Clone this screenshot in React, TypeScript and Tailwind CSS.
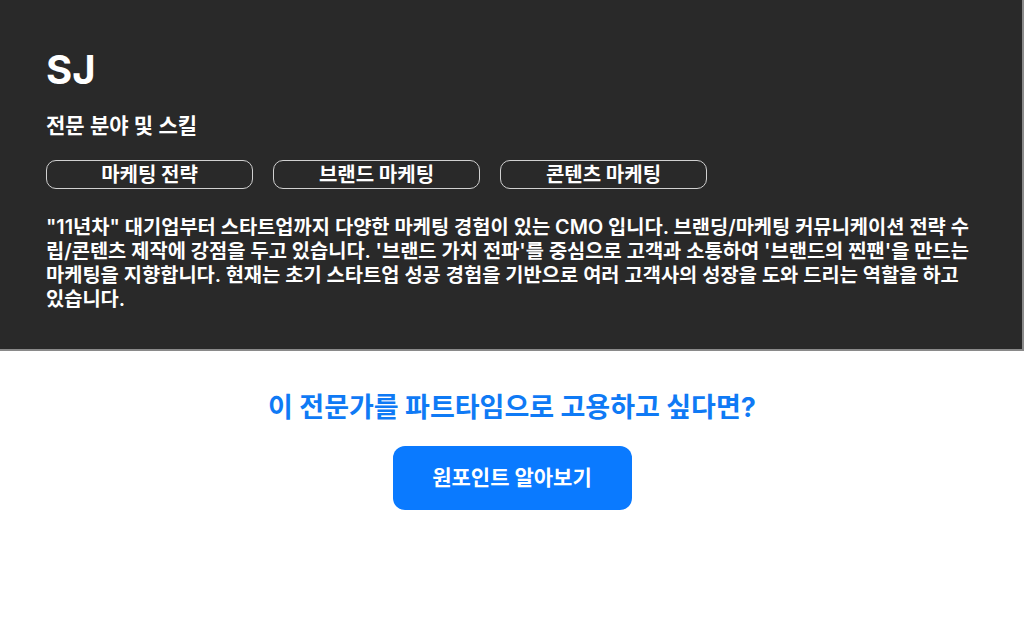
import React from "react";

const font = { fontFamily: '"Inter", "Noto Sans CJK KR", sans-serif' };

const skills = ["마케팅 전략", "브랜드 마케팅", "콘텐츠 마케팅"];

export default function App() {
  return (
    <div className="w-[1024px] h-[623px] bg-white" style={font}>
      <section className="w-[1024px] bg-[#292929] border-r-2 border-b-2 border-[#8a8a8a] px-[46px] pt-[44px] pb-[38px] text-white">
        <h1 className="text-[40px] leading-[52px] font-bold">SJ</h1>
        <h2 className="mt-[16px] text-[21px] leading-[28px] font-semibold">전문 분야 및 스킬</h2>
        <div className="mt-[20px] flex gap-[20px]">
          {skills.map((s) => (
            <div
              key={s}
              className="w-[207px] h-[29px] rounded-[10px] border border-[#d0d0d0] flex items-center justify-center text-[20px] font-bold"
            >
              {s}
            </div>
          ))}
        </div>
        <p className="mt-[26px] text-[19.8px] leading-[24px] font-semibold">
          "11년차" 대기업부터 스타트업까지 다양한 마케팅 경험이 있는 CMO 입니다. 브랜딩/마케팅 커뮤니케이션 전략 수립/콘텐츠 제작에 강점을 두고 있습니다. '브랜드 가치 전파'를 중심으로 고객과 소통하여 '브랜드의 찐팬'을 만드는 마케팅을 지향합니다. 현재는 초기 스타트업 성공 경험을 기반으로 여러 고객사의 성장을 도와 드리는 역할을 하고 있습니다.
        </p>
      </section>
      <div className="flex flex-col items-center pt-[39px]">
        <h3 className="text-[27px] leading-[36px] font-bold text-[#0f7af5]">이 전문가를 파트타임으로 고용하고 싶다면?</h3>
        <button className="mt-[20px] w-[239px] h-[64px] rounded-[12px] bg-[#0a7aff] text-white text-[21px] font-bold">
          원포인트 알아보기
        </button>
      </div>
    </div>
  );
}
